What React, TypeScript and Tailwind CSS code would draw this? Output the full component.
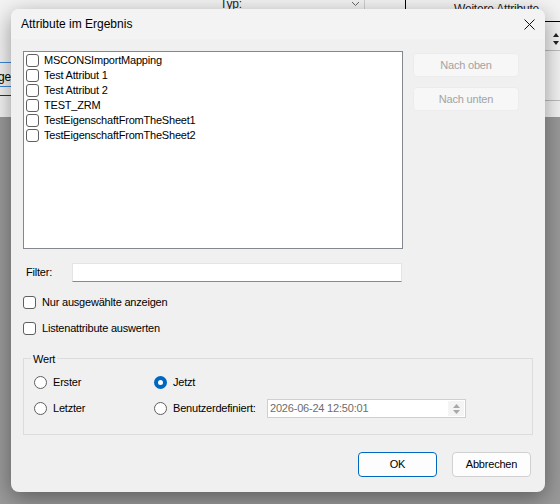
import type { ReactNode } from 'react'

const items = [
  'MSCONSImportMapping',
  'Test Attribut 1',
  'Test Attribut 2',
  'TEST_ZRM',
  'TestEigenschaftFromTheSheet1',
  'TestEigenschaftFromTheSheet2',
]

function CheckBox() {
  return <span className="block h-[13px] w-[13px] shrink-0 rounded-[3px] border border-[#5f5f5f] bg-white" />
}

function Radio({ checked = false }: { checked?: boolean }) {
  if (checked) {
    return (
      <span className="flex h-[13px] w-[13px] shrink-0 items-center justify-center rounded-full bg-[#0067c0]">
        <span className="block h-[5px] w-[5px] rounded-full bg-white" />
      </span>
    )
  }
  return <span className="block h-[13px] w-[13px] shrink-0 rounded-full border border-[#5f5f5f] bg-white" />
}

function SideButton({ children }: { children: ReactNode }) {
  return (
    <div className="flex h-[24px] w-[106px] items-center justify-center rounded-[4px] border border-[#ececec] bg-[#f7f7f7] text-[#a3a3a3]">
      {children}
    </div>
  )
}

export default function App() {
  return (
    <div className="relative h-[504px] w-[560px] overflow-hidden bg-[#9a9a9a] font-['Liberation_Sans',Arial,sans-serif] text-[11px] tracking-[-0.2px] text-black">
      {/* Hauptfenster im Hintergrund */}
      <div className="relative h-[117px] w-full bg-[#f3f3f3]">
        <span className="absolute left-[220px] top-[-5px] text-[12px] text-[#222]">Typ:</span>
        <div className="absolute left-[250px] top-0 h-[9px] w-[115px] border-r border-[#cfcfcf]">
          <svg className="absolute right-[4px] top-[1px]" width="9" height="6" viewBox="0 0 9 6">
            <path d="M1 1l3.5 3.5L8 1" fill="none" stroke="#666" strokeWidth="1" />
          </svg>
        </div>
        <div className="absolute left-[405px] top-0 h-[10px] w-px bg-black" />
        <span className="absolute left-[454px] top-0 text-[12px] text-[#222]">Weitere Attribute</span>
        <div className="absolute left-0 top-[62px] h-[25px] w-[12px] border-y border-[#3b86d6]">
          <span className="absolute -left-[2px] top-[5px] text-[12px]">ge</span>
        </div>
        <div className="absolute left-0 top-[95px] h-px w-[12px] bg-[#333]" />
        <div className="absolute left-[544px] top-[21px] h-px w-[16px] bg-black" />
        <div className="absolute left-[552px] top-[32px] flex h-[14px] w-[8px] flex-col justify-between">
          <svg width="8" height="6" viewBox="0 0 8 6"><path d="M4 1L7 5H1z" fill="#222" /></svg>
          <svg width="8" height="6" viewBox="0 0 8 6"><path d="M4 5L7 1H1z" fill="#222" /></svg>
        </div>
        <div className="absolute left-[544px] top-[50px] h-px w-[16px] bg-[#bdbdbd]" />
        <div className="absolute left-[544px] top-[100px] h-px w-[16px] bg-[#bdbdbd]" />
      </div>

      {/* Dialog */}
      <div className="absolute left-[11px] top-[9px] flex h-[483px] w-[534px] flex-col overflow-hidden rounded-[8px] bg-[#f0f0f0] shadow-[0_6px_22px_rgba(0,0,0,0.4)]">
        <div className="flex h-[30px] shrink-0 items-center justify-between bg-[#f3f3f3] px-[10px] text-[12px] tracking-normal">
          <span>Attribute im Ergebnis</span>
          <svg width="11" height="11" viewBox="0 0 11 11">
            <path d="M0.5 0.5l10 10M10.5 0.5l-10 10" stroke="#111" strokeWidth="1" />
          </svg>
        </div>

        <div className="flex flex-col px-[12px] pt-[12px]">
          <div className="flex">
            <div className="h-[198px] w-[380px] border border-[#828790] bg-white pl-[2px] pt-px">
              {items.map(item => (
                <div key={item} className="flex h-[15px] items-center gap-[5px]">
                  <CheckBox />
                  <span>{item}</span>
                </div>
              ))}
            </div>
            <div className="ml-[10px] flex flex-col gap-[10px] pt-[2px]">
              <SideButton>Nach oben</SideButton>
              <SideButton>Nach unten</SideButton>
            </div>
          </div>

          <div className="mt-[14px] flex h-[19px] items-center">
            <span className="w-[49px] pl-[3px]">Filter:</span>
            <div className="h-[19px] w-[330px] border border-[#e4e4e4] border-b-[#8a8a8a] bg-white" />
          </div>

          <div className="mt-[14px] flex h-[13px] items-center gap-[6px]">
            <CheckBox />
            <span>Nur ausgewählte anzeigen</span>
          </div>
          <div className="mt-[13px] flex h-[13px] items-center gap-[6px]">
            <CheckBox />
            <span>Listenattribute auswerten</span>
          </div>

          {/* Gruppe Wert */}
          <div className="relative mt-[23px] h-[77px] w-[510px] border border-[#dcdcdc] pl-[10px] pt-[14px]">
            <span className="absolute -top-[8px] left-[7px] bg-[#f0f0f0] px-[2px]">Wert</span>
            <div className="flex flex-col gap-[7px]">
              <div className="flex h-[19px] items-center">
                <div className="flex w-[120px] items-center gap-[6px]">
                  <Radio />
                  <span>Erster</span>
                </div>
                <div className="flex items-center gap-[6px]">
                  <Radio checked />
                  <span>Jetzt</span>
                </div>
              </div>
              <div className="flex h-[19px] items-center">
                <div className="flex w-[120px] items-center gap-[6px]">
                  <Radio />
                  <span>Letzter</span>
                </div>
                <div className="flex items-center gap-[6px]">
                  <Radio />
                  <span className="w-[94px]">Benutzerdefiniert:</span>
                </div>
                <div className="flex h-[19px] w-[199px] items-center justify-between border border-[#cfcfcf] bg-white pl-[2px] pr-[1px] text-[#6d6d6d]">
                  <span>2026-06-24 12:50:01</span>
                  <div className="flex h-[15px] w-[16px] flex-col items-center justify-center gap-[2px] bg-[#f4f4f4]">
                    <svg width="7" height="4" viewBox="0 0 7 4"><path d="M3.5 0L7 4H0z" fill="#a8a8a8" /></svg>
                    <svg width="7" height="4" viewBox="0 0 7 4"><path d="M3.5 4L7 0H0z" fill="#a8a8a8" /></svg>
                  </div>
                </div>
              </div>
            </div>
          </div>

          <div className="mr-[2px] mt-[17px] flex justify-end gap-[15px]">
            <div className="flex h-[25px] w-[79px] items-center justify-center rounded-[4px] border border-[#0067c0] bg-[#fdfdfd]">
              OK
            </div>
            <div className="flex h-[25px] w-[79px] items-center justify-center rounded-[4px] border border-[#d0d0d0] bg-[#fdfdfd]">
              Abbrechen
            </div>
          </div>
        </div>
      </div>
    </div>
  )
}
